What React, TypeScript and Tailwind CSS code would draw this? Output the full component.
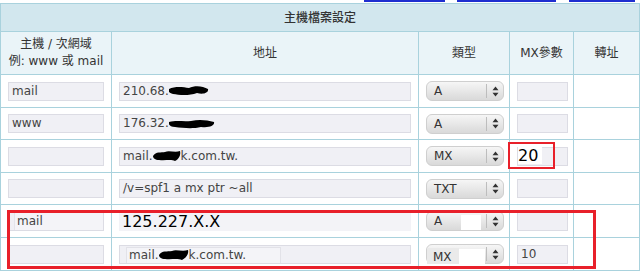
import React from 'react';

const font = { fontFamily: '"DejaVu Sans", "Noto Sans CJK TC", sans-serif' };

function Blob({ w, d }: { w: number; d: string }) {
  return (
    <svg width={w} height={12} viewBox={`0 0 ${w} 12`} className="inline-block align-middle">
      <path d={d} fill="#000" />
    </svg>
  );
}

function Field({ children, className = '' }: { children?: React.ReactNode; className?: string }) {
  return (
    <div
      className={`h-[19px] bg-[#f0f0f5] border border-[#dcdce4] text-[12px] text-[#444] leading-[17px] px-[3px] whitespace-nowrap overflow-hidden ${className}`}
    >
      {children}
    </div>
  );
}

function Select({ value, patch }: { value: string; patch?: boolean }) {
  return (
    <div className="relative flex items-center w-[78px] h-[20px] rounded-[6px] border border-[#cfcfcf] bg-gradient-to-b from-[#f6f6f6] to-[#d9d9d9] text-[12px] text-[#333]">
      <span className="pl-[7px] flex-1">{value}</span>
      <span className="w-px h-[14px] bg-[#bdbdbd]" />
      <span className="w-[16px] flex flex-col items-center justify-center leading-none">
        <svg width="7" height="11" viewBox="0 0 7 11">
          <path d="M3.5 0.5 L6.5 4.3 L0.5 4.3 Z M3.5 10.5 L6.5 6.7 L0.5 6.7 Z" fill="#333" />
        </svg>
      </span>
      {patch && <span className="absolute left-[34px] top-[3px] w-[20px] h-[15px] bg-white" />}
    </div>
  );
}

const td = 'border border-[#a9d2dd] px-[7px] align-middle';

export default function App() {
  const rows = [
    { host: 'mail', addr: <>210.68.<Blob w={40} d="M0 4 C6 1 14 2 20 3 C26 0 34 1 39 4 C40 8 34 10 28 8 C20 11 10 10 4 9 C0 8 -1 6 0 4 Z" /></>, type: 'A', mx: '' },
    { host: 'www', addr: <>176.32.<Blob w={46} d="M0 4 C8 2 14 4 22 3 C30 1 38 2 45 4 C46 8 40 10 32 9 C24 11 14 10 6 9 C1 9 -1 6 0 4 Z" /></>, type: 'A', mx: '' },
    { host: '', addr: <>mail.<Blob w={28} d="M0 6 C3 1 8 3 12 2 C16 0 22 3 27 1 C28 5 26 9 22 11 C18 9 12 11 6 10 C2 10 0 8 0 6 Z" />k.com.tw.</>, type: 'MX', mx: '' },
    { host: '', addr: '/v=spf1 a mx ptr ~all', type: 'TXT', mx: '' },
  ];

  return (
    <div className="w-[640px] h-[271px] bg-white overflow-hidden" style={font}>
      <div className="flex h-[3px] items-start">
        <div className="ml-[364px] w-[81px] h-[2px] bg-[#1f2fd0]" />
        <div className="ml-[12px] w-[99px] h-[2px] bg-[#1f2fd0]" />
        <div className="ml-[13px] w-[66px] h-[2px] bg-[#1f2fd0]" />
      </div>
      <div className="relative">
        <table className="w-[639px] table-fixed border-collapse text-[12px] text-[#333]">
          <colgroup>
            <col className="w-[111px]" />
            <col className="w-[307px]" />
            <col className="w-[91px]" />
            <col className="w-[64px]" />
            <col className="w-[66px]" />
          </colgroup>
          <tbody>
            <tr className="h-[28px] bg-[#d2e7ee]">
              <td colSpan={5} className="border border-[#a9d2dd] text-center font-medium">主機檔案設定</td>
            </tr>
            <tr className="h-[43px] bg-[#eaf4f8] text-center">
              <td className="border border-[#a9d2dd] leading-[17px]">
                主機 / 次網域<br />例: www 或 mail
              </td>
              <td className="border border-[#a9d2dd]">地址</td>
              <td className="border border-[#a9d2dd]">類型</td>
              <td className="border border-[#a9d2dd]">MX參數</td>
              <td className="border border-[#a9d2dd]">轉址</td>
            </tr>
            {rows.map((r, i) => (
              <tr key={i} className={i % 2 === 0 ? 'h-[33px]' : 'h-[32px]'}>
                <td className={td}><Field>{r.host}</Field></td>
                <td className={td}><Field>{r.addr}</Field></td>
                <td className={td}><Select value={r.type} /></td>
                <td className={td}><Field className="w-[51px]">{r.mx}</Field></td>
                <td className={td} />
              </tr>
            ))}
            <tr className="h-[33px]">
              <td className={td}>
                <Field className="!px-0 flex">
                  <span className="ml-[5px] pl-[2px] flex-1 bg-[#f4f4f8] border-l border-[#e4e4ea]">mail</span>
                </Field>
              </td>
              <td className={td}>
                <div className="h-[19px] bg-[#f3f3f7] text-[16px] leading-[19px] text-black pl-[3px]">125.227.X.X</div>
              </td>
              <td className={td}><Select value="A" patch /></td>
              <td className={td}><Field className="w-[51px]" /></td>
              <td className={td} />
            </tr>
            <tr className="h-[33px]">
              <td className={td}><Field /></td>
              <td className={td}>
                <Field className="!px-0 pt-[0px]">
                  <div className="ml-[6px] mt-[1px] w-[155px] h-[17px] border border-[#e2e2e8] bg-[#f4f4f8] pl-[2px] leading-[15px]">
                    mail.<Blob w={30} d="M0 6 C3 1 8 3 13 2 C17 0 23 3 29 1 C30 5 27 9 23 11 C18 9 12 11 6 10 C2 10 0 8 0 6 Z" />k.com.tw.
                  </div>
                </Field>
              </td>
              <td className={td}>
                <div className="relative">
                  <Select value="" />
                  <span className="absolute left-[7px] top-[5px] w-[52px] h-[16px] bg-white" />
                  <span className="absolute left-[1px] top-[4px] w-[32px] h-[16px] bg-[#eaeaea] text-[12px] text-[#333] pl-[6px] leading-[18px]">MX</span>
                </div>
              </td>
              <td className={td}><Field className="w-[51px] text-[#333]">10</Field></td>
              <td className={td} />
            </tr>
          </tbody>
        </table>
        <div className="absolute left-[508px] top-[139px] w-[47px] h-[27px] border-2 border-[#e8202a] bg-transparent pointer-events-none">
          <div className="ml-[8px] mt-[3px] w-[24px] h-[17px] bg-white text-[16px] leading-[17px] text-black">20</div>
        </div>
        <div className="absolute left-[7px] top-[207px] w-[589px] h-[59px] border-[3px] border-[#e8202a] pointer-events-none" />
      </div>
    </div>
  );
}
